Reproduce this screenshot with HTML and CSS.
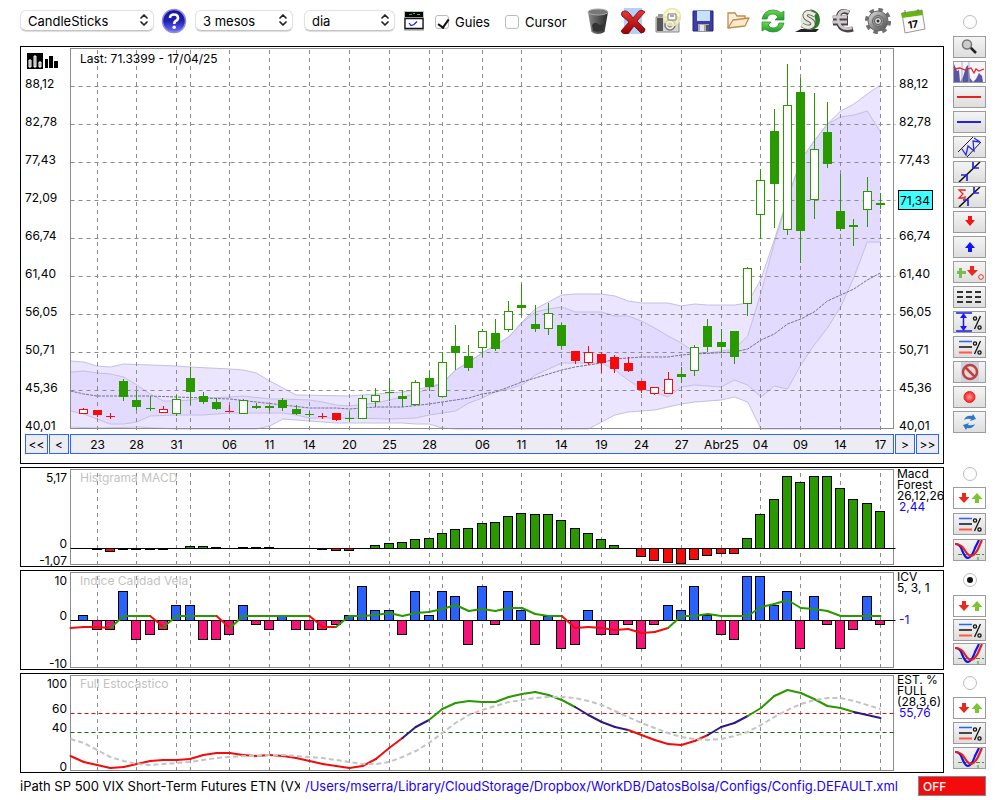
FILE: index.html
```html
<!DOCTYPE html>
<html lang="ca">
<head>
  <meta charset="UTF-8" />
  <meta name="viewport" content="width=device-width, initial-scale=1.0" />
  <title>iPath SP 500 VIX Short-Term Futures ETN</title>
  <link rel="stylesheet" href="styles.css">
</head>
<body>
  <!-- shared icons -->
  <svg class="defs" width="0" height="0" aria-hidden="true">
    <defs>
      <linearGradient id="gBall" x1="0" y1="0" x2="0" y2="1"><stop offset="0" stop-color="#15159a"/><stop offset=".5" stop-color="#2020b0"/><stop offset="1" stop-color="#7373ff"/></linearGradient>
      <linearGradient id="gMetal" x1="0" y1="0" x2="1" y2="1"><stop offset="0" stop-color="#e8e8e8"/><stop offset=".5" stop-color="#8e8e8e"/><stop offset="1" stop-color="#4a4a4a"/></linearGradient>
      <linearGradient id="gTrash" x1="0" x2="1" y1="0" y2="0"><stop offset="0" stop-color="#8a8a8a"/><stop offset=".5" stop-color="#555"/><stop offset="1" stop-color="#2b2b2b"/></linearGradient>
      <linearGradient id="gRed" x1="0" y1="0" x2="0" y2="1"><stop offset="0" stop-color="#e83a3a"/><stop offset="1" stop-color="#960000"/></linearGradient>
      <linearGradient id="gGreen" x1="0" y1="0" x2="0" y2="1"><stop offset="0" stop-color="#6fdc4a"/><stop offset="1" stop-color="#1f9a30"/></linearGradient>
      <radialGradient id="gDot"><stop offset="0" stop-color="#ff9a9a"/><stop offset="1" stop-color="#f02020"/></radialGradient>
      <symbol id="updown" viewBox="0 0 10 14"><path d="M2 5L5 2L8 5M2 9L5 12L8 9" fill="none" stroke="#222" stroke-width="1.7" stroke-linecap="round" stroke-linejoin="round"/></symbol>
      <symbol id="arrows" viewBox="0 0 31 20">
        <path d="M8 5h4v4h3.500L10 15L4.500 9H8z" fill="#e8291c"/>
        <path d="M21 15h4v-4h3.500L23 5L17.500 11H21z" fill="#7ac62f"/>
      </symbol>
      <symbol id="lines" viewBox="0 0 31 20">
        <path d="M5 4.500h13" stroke="#2a62ff" stroke-width="1.500"/><path d="M5 10h13" stroke="#111" stroke-width="1.500"/><path d="M5 15.500h13" stroke="#ff5a44" stroke-width="2"/>
        <g fill="none" stroke="#111" stroke-width="1.300"><path d="M26.500 4L20.500 17"/><circle cx="21" cy="6.500" r="1.600"/><circle cx="25.500" cy="15.500" r="1.600"/></g>
      </symbol>
      <symbol id="curves" viewBox="0 0 31 20">
        <path d="M4 14.500h26M24 17v3" stroke="#4a8a3a" stroke-dasharray="4 2"/>
        <path d="M1 4Q6 4 8 10Q11 18 14 18Q18 17 21 8L25 0" fill="none" stroke="#1414e6" stroke-width="2.200"/>
        <path d="M1 4Q7 4 10 9Q14 16 17 16Q21 15 24 9L28 0" fill="none" stroke="#e32020" stroke-width="2.200"/>
      </symbol>
    </defs>
  </svg>

  <main class="page">
    <header class="toolbar">
      <span class="select wide">
        <select id="chartType" aria-label="Tipus"><option>CandleSticks</option><option>Barres</option></select>
        <svg><use href="#updown"/></svg>
      </span>
      <button class="icon" title="Ajuda">
        <svg viewBox="0 0 26 26"><circle cx="13" cy="13" r="11.500" fill="url(#gBall)" stroke="#8d8dde" stroke-width="1.500"/><path d="M9 10Q9 6.500 13 6.500T17 10Q17 12 14.500 13.200Q13.200 14 13.200 16" fill="none" stroke="#fff" stroke-width="2.600"/><circle cx="13.200" cy="19.300" r="1.700" fill="#fff"/></svg>
      </button>
      <span class="select medium">
        <select id="range" aria-label="Rang"><option>3 mesos</option><option>6 mesos</option></select>
        <svg><use href="#updown"/></svg>
      </span>
      <span class="select small">
        <select id="period" aria-label="Període"><option>dia</option><option>setmana</option></select>
        <svg><use href="#updown"/></svg>
      </span>
      <button class="icon" title="Finestra">
        <svg viewBox="0 0 26 26"><path d="M3 3h20v20H3z" fill="#c4c4c4"/><path d="M4 4h18v5H4z"/><path d="M8 6.500h3m1-1h2m2 1h3" stroke="#27c427"/><path d="M4 10.500h18v10H4z" fill="#fff" stroke="#111" stroke-width="1.300"/><path d="M8 15l2 2.500l3-1l3-3" fill="none" stroke="#1b1be0" stroke-width="1.200"/></svg>
      </button>
      <label class="check"><input type="checkbox" checked> Guies</label>
      <label class="check"><input type="checkbox"> Cursor</label>

      <div class="actions">
        <button class="icon" title="Paperera">
          <svg viewBox="0 0 26 26"><path d="M3 4L6.500 24Q13 28 19.500 24L23 4z" fill="url(#gTrash)"/><ellipse cx="13" cy="4" rx="10" ry="3" fill="#777" stroke="#aaa"/><path d="M7 17q3-4 6-1t6-2l-1 8q-5 3-10 1z" fill="#333"/></svg>
        </button>
        <button class="icon" title="Esborrar">
          <svg viewBox="0 0 26 26"><path d="M4 0h18v26H4z" fill="#b4d0f8"/><path d="M2 4Q6 1 10 6L13 10L19 3Q22 1 25 4L17 13L25 21Q25 25 21 25L14 18L8 26Q3 27 1 23L9 14L2 8Q1 6 2 4z" fill="url(#gRed)" stroke="#7e0000" stroke-width=".8"/></svg>
        </button>
        <button class="icon" title="Captura">
          <svg viewBox="0 0 26 26"><path d="M1 9h23v15H1z" fill="#d5d5d5" stroke="#888"/><path d="M2 10h6v13H2z" fill="#555"/><path d="M3 6h5v3H3z" fill="#999"/><circle cx="15" cy="17" r="5" fill="#eee" stroke="#777" stroke-width="1.500"/><circle cx="15" cy="17" r="2.500" fill="#888"/><circle cx="17" cy="9" r="8.500" fill="#f8f6c8" fill-opacity=".7" stroke="#ebe6a8" stroke-width="1.500"/><path d="M13 6h8v6h-8z" fill="#fff" stroke="#777"/><path d="M15 8h4" stroke="#555"/></svg>
        </button>
        <button class="icon" title="Desar">
          <svg viewBox="0 0 26 26"><path d="M3 3h20v20H3z" fill="#3d3da8" stroke="#22227c"/><path d="M7 3h13v10H7z" fill="#c6e1fb"/><path d="M8 16h11v7H8z" fill="#aaa"/><path d="M10 17h4v6h-4z" fill="#e7e7e7"/><path d="M16 17h3v6h-3z" fill="#555"/></svg>
        </button>
        <button class="icon" title="Obrir">
          <svg viewBox="0 0 26 26"><path d="M3 20V5h7l2 3h8v4" fill="#fdf1de" stroke="#c38b4b" stroke-width="1.300"/><path d="M3 20L8 12L24 10L20 18z" fill="#fde9cb" stroke="#c38b4b" stroke-width="1.300" stroke-linejoin="round"/></svg>
        </button>
        <button class="icon" title="Refrescar">
          <svg viewBox="0 0 26 26"><g fill="url(#gGreen)" stroke="#1b8a2c" stroke-width=".7"><path d="M2 11Q4 2 13 2Q18 2 21 5L24 3V12H15L18 9Q16 6 13 6Q8 6 7 11z"/><path d="M24 15Q22 24 13 24Q8 24 5 21L2 23V14H11L8 17Q10 20 13 20Q18 20 19 15z"/></g></svg>
        </button>
        <button class="icon" title="Dòlar">
          <svg viewBox="0 0 26 26"><path d="M0 24h21l3-3H6z" fill="#222"/><circle cx="15" cy="12" r="9.500" fill="#dfe6d8"/><path d="M15 1Q25 3 25 12Q25 21 15 22Q22 17 20 10Q19 5 15 1z" fill="#2c7a2c"/><path d="M20 7Q12 2 10 7Q10 10 15 12Q20 15 17 18Q13 21 7 17" fill="none" stroke="#555" stroke-width="5"/><path d="M20 7Q12 2 10 7Q10 10 15 12Q20 15 17 18Q13 21 7 17" fill="none" stroke="#eceade" stroke-width="3.400"/></svg>
        </button>
        <button class="icon" title="Euro">
          <svg viewBox="0 0 26 26"><path d="M19 5Q9 0 8 11Q9 25 23 21M3 10l15 0M3 15h15" fill="none" stroke="#4b4347" stroke-width="5"/><path d="M19 4Q9 0 8 11Q9 23 22 20M2 9h15M2 14h15" fill="none" stroke="#cfc9cd" stroke-width="2.800"/></svg>
        </button>
        <button class="icon" title="Configuració">
          <svg viewBox="0 0 26 26"><circle cx="13" cy="13" r="11.400" fill="none" stroke="#707070" stroke-width="3.500" stroke-dasharray="4.500 4.454"/><circle cx="13" cy="13" r="10" fill="url(#gMetal)" stroke="#666"/><circle cx="13" cy="13" r="5.500" fill="#999" stroke="#666"/><circle cx="13" cy="13" r="3.500" fill="#ddd" stroke="#555"/><circle cx="13" cy="13" r="1.500" fill="#333"/></svg>
        </button>
        <button class="icon" title="Calendari">
          <svg viewBox="0 0 26 26"><path d="M2 5L22 2L25 21L5 25z" fill="#fafafa" stroke="#999"/><path d="M1 5L22 2L23 7L2 10z" fill="#67b512"/><path d="M5 2v4M18 1v4" stroke="#777"/><text x="8" y="20" class="cal" transform="rotate(-8 13 16)">17</text></svg>
        </button>
      </div>
    </header>

    <aside class="side side-tools">
      <input type="radio" name="panel" aria-label="Preu">
      <button title="Lupa"><svg viewBox="0 0 31 20"><path d="M16 10l6 6" stroke="#222" stroke-width="2.500"/><circle cx="13" cy="7.500" r="4.500" fill="#ccc" stroke="#777" stroke-width="1.500"/></svg></button>
      <button title="Volum"><svg viewBox="0 0 31 20"><path d="M0 0h31v20H0z" fill="#f4f4fa"/><path d="M0 20V2L3 9L5 8L6 20L9 15L12 5L14 3L16 16L19 20L22 17L25 11L28 14L29 20z" fill="#5757a6"/><path d="M8 0v20M15 0v20" stroke="#b0b0cc"/><path d="M0 7L6 6L11 8L17 6L20 11L22 7L25 9L30 7" fill="none" stroke="#e22" stroke-width="1.300"/></svg></button>
      <button title="Línia vermella"><svg viewBox="0 0 31 20"><path d="M3 10h24" stroke="#e52222" stroke-width="2"/></svg></button>
      <button title="Línia blava"><svg viewBox="0 0 31 20"><path d="M3 10h24" stroke="#2222f0" stroke-width="2"/></svg></button>
      <button title="Canal"><svg viewBox="0 0 31 20"><path d="M4 15L19 0M13 20L27 5" stroke="#222"/><path d="M8 12L12 18L14 9L20 14L19 4L26 5L20 1" fill="none" stroke="#2a2af0" stroke-width="1.300"/></svg></button>
      <button title="Tendència"><svg viewBox="0 0 31 20"><path d="M5 20L26 0" stroke="#111" stroke-width="1.500"/><path d="M7 13h6v6M19 0v6h6" fill="none" stroke="#2525d8" stroke-width="1.700"/></svg></button>
      <button title="Regressió"><svg viewBox="0 0 31 20"><path d="M5 20L26 0" stroke="#111" stroke-width="1.500"/><path d="M9 13h5v6M20 0v6h5" fill="none" stroke="#2525d8" stroke-width="1.700"/><path d="M11 4V3H5L9 7L5 11h6v-2" fill="none" stroke="#e22" stroke-width="1.300"/></svg></button>
      <button title="Venda"><svg viewBox="0 0 31 20"><path d="M14 4h4v4h3L16 14L11 8h3z" fill="#fa1212"/></svg></button>
      <button title="Compra"><svg viewBox="0 0 31 20"><path d="M14 15h4v-4h3L16 5L11 11h3z" fill="#1212fa"/></svg></button>
      <button title="Senyals"><svg viewBox="0 0 31 20"><path d="M5 6h3v3h4v3H8v4H5v-4H3V9h2z" fill="#79bd51"/><path d="M16 4h4v4h4L18 14L13 8h3z" fill="#e8291c"/><circle cx="27" cy="15" r="2.300" fill="#fff" stroke="#e22"/></svg></button>
      <button title="Nivells"><svg viewBox="0 0 31 20"><path d="M3 5h24M3 10h24M3 15h24" stroke="#333" stroke-width="2" stroke-dasharray="6 3"/></svg></button>
      <button title="Alçada"><svg viewBox="0 0 31 20"><path d="M2 1h16M2 19h16M9.500 3v14" stroke="#1919f0" stroke-width="1.500"/><path d="M9.500 1L13 6H6zM9.500 19L13 14H6z" fill="#1919f0"/><g fill="none" stroke="#111" stroke-width="1.300"><path d="M26.500 4L20.500 17"/><circle cx="21" cy="6.500" r="1.600"/><circle cx="25.500" cy="15.500" r="1.600"/></g></svg></button>
      <button title="Percentatges"><svg><use href="#lines"/></svg></button>
      <button title="Anul·lar"><svg viewBox="0 0 31 20"><path d="M7 0h18v20H7z" fill="#cfd0e0"/><circle cx="16" cy="10" r="7" fill="#ecd5d5" stroke="#b94444" stroke-width="2.500"/><path d="M11 5l10 10" stroke="#b94444" stroke-width="2.500"/></svg></button>
      <button title="Gravar"><svg viewBox="0 0 31 20"><circle cx="15.500" cy="10" r="5.500" fill="url(#gDot)" stroke="#e22"/></svg></button>
      <button title="Actualitzar"><svg viewBox="0 0 31 20"><g fill="#2a78c6"><path d="M10 8Q12 3 18 4L19 2L22 7L16 9L17 7Q13 6 10 8z"/><path d="M21 12Q19 17 13 16L12 18L9 13L15 11L14 13Q18 14 21 12z"/></g></svg></button>
    </aside>

    <section class="panel price">
      <svg class="chart" id="price"></svg>
      <nav class="dates">
        <button>&lt;&lt;</button>
        <button class="one">&lt;</button>
        <svg class="dateBar" id="dates"></svg>
        <button class="one">&gt;</button>
        <button>&gt;&gt;</button>
      </nav>
    </section>

    <section class="panel"><svg class="chart" id="macd"></svg></section>
    <aside class="side side-macd">
      <input type="radio" name="panel" aria-label="Macd">
      <button class="plain" title="Senyals"><svg><use href="#arrows"/></svg></button>
      <button title="Percentatges"><svg><use href="#lines"/></svg></button>
      <button title="Corbes"><svg><use href="#curves"/></svg></button>
    </aside>

    <section class="panel"><svg class="chart" id="icv"></svg></section>
    <aside class="side side-icv">
      <input type="radio" name="panel" aria-label="ICV" checked>
      <button class="plain" title="Senyals"><svg><use href="#arrows"/></svg></button>
      <button title="Percentatges"><svg><use href="#lines"/></svg></button>
      <button title="Corbes"><svg><use href="#curves"/></svg></button>
    </aside>

    <section class="panel"><svg class="chart" id="sto"></svg></section>
    <aside class="side side-sto">
      <input type="radio" name="panel" aria-label="Estocastico">
      <button class="plain" title="Senyals"><svg><use href="#arrows"/></svg></button>
      <button title="Percentatges"><svg><use href="#lines"/></svg></button>
      <button title="Corbes"><svg><use href="#curves"/></svg></button>
    </aside>

    <footer class="status">
      <span class="name">iPath SP 500 VIX Short-Term Futures ETN (VXX)</span>
      <a href="#">/Users/mserra/Library/CloudStorage/Dropbox/WorkDB/DatosBolsa/Configs/Config.DEFAULT.xml</a>
      <button class="off">OFF</button>
    </footer>
  </main>

  <script src="chart.js"></script>
</body>
</html>
```
FILE: styles.css
```css
* {
  box-sizing: border-box;
}
body {
  margin: 0;
  background: #fff;
  color: #000;
  font-family: Inter, Roboto, sans-serif;
  font-size: 12px;
}
button, select, input {
  font: inherit;
  color: inherit;
  margin: 0;
  padding: 0;
}
.defs {
  position: absolute;
}
.page {
  display: grid;
  grid-template-columns: 1fr 33px;
  grid-template-rows: 43px auto auto auto auto 20px;
  gap: 3px 9px;
  padding: 0 14px 0 20px;
}

/* toolbar */
.toolbar {
  grid-area: 1 / 1;
  display: flex;
  align-items: center;
  padding-bottom: 2px;
}
.select {
  position: relative;
  height: 21px;
  margin-right: 7px;
}
.select.wide {
  width: 134px;
}
.select.medium {
  width: 98px;
  margin-left: 8px;
  margin-right: 11px;
}
.select.small {
  width: 91px;
  margin-right: 6px;
}
.select select {
  appearance: none;
  width: 100%;
  height: 100%;
  padding-left: 7px;
  font-size: 13px;
  background: #fff;
  border: 1px solid #e2e2e2;
  border-bottom-color: #c4c4c4;
  border-radius: 6px;
  box-shadow: 0 1px 1px #ddd;
}
.select svg {
  position: absolute;
  top: 3px;
  right: 5px;
  width: 10px;
  height: 14px;
  pointer-events: none;
}
.icon {
  width: 26px;
  height: 26px;
  border: 0;
  background: none;
}
.icon svg {
  display: block;
  width: 26px;
  height: 26px;
}
.check {
  display: flex;
  align-items: center;
  gap: 6px;
  margin-left: 8px;
  padding-top: 3px;
  font-size: 13px;
}
.check + .check {
  margin-left: 15px;
}
input[type="checkbox"], input[type="radio"] {
  appearance: none;
  position: relative;
  width: 14px;
  height: 14px;
  background: #fff;
  border: 1px solid #bbb;
  border-radius: 3px;
}
input[type="radio"] {
  border-radius: 50%;
}
input[type="checkbox"]:checked::after {
  content: "";
  position: absolute;
  left: 4px;
  top: 1px;
  width: 5px;
  height: 9px;
  border: solid #111;
  border-width: 0 2px 2px 0;
  transform: rotate(35deg);
}
input[type="radio"]:checked::after {
  content: "";
  position: absolute;
  inset: 3px;
  border-radius: 50%;
  background: #111;
}
.actions {
  display: flex;
  gap: 9px;
  margin-left: auto;
  margin-right: 18px;
}
.cal {
  font-size: 10px;
  font-weight: bold;
}

/* tool columns */
.side {
  grid-column: 2;
  display: flex;
  flex-direction: column;
  align-items: center;
  gap: 3px;
}
.side button {
  width: 33px;
  height: 22px;
  border: 1px solid #9c9c9c;
  background: linear-gradient(#f4f4f4, #dedede);
}
.side .plain {
  background: #fff;
}
.side button svg {
  display: block;
  width: 31px;
  height: 20px;
}
.side-tools {
  grid-row: 1 / 3;
  padding-top: 15px;
}
.side-tools input {
  margin-bottom: 4px;
}
.side-macd {
  gap: 4px;
}
.side-macd input {
  margin-bottom: 2px;
}
.side-icv {
  gap: 2px;
  padding-top: 3px;
}
.side-icv input {
  margin-bottom: 6px;
}
.side-sto {
  padding-top: 3px;
}
.side-sto input {
  margin-bottom: 4px;
}

/* chart panels */
.panel {
  grid-column: 1;
  min-width: 0;
  border: 1px solid #000;
}
.chart {
  display: block;
  width: 100%;
  height: 98px;
}
.price .chart {
  height: 387px;
}
.dates {
  display: flex;
  gap: 1px;
  padding: 0 4px 9px;
}
.dates button, .dateBar {
  height: 20px;
  background: #ececf2;
  border: 1px solid #2962ff;
}
.dates button {
  width: 23px;
}
.dates .one {
  width: 20px;
}
.dateBar {
  flex: 1;
  min-width: 0;
}
text {
  font-size: 12px;
}
.title {
  fill: #c2c2c2;
}
.value {
  fill: #1a00ff;
}

/* drawing */
.frame, .grid {
  fill: none;
  stroke: #8c8c8c;
}
.grid {
  stroke-dasharray: 4 4;
}
.outer {
  fill: #ebe5ff;
}
.inner {
  fill: #e3daff;
}
.edge {
  fill: none;
  stroke: #c5bfe2;
}
.mid {
  fill: none;
  stroke: #77738c;
  stroke-dasharray: 3 1;
}
.line {
  fill: none;
  stroke-width: 2;
  stroke-linecap: round;
}
.slow {
  stroke: #c4c4c4;
  stroke-linecap: butt;
  stroke-dasharray: 5 3;
}
.zero {
  stroke: #000;
}

/* status bar */
.status {
  grid-column: 1 / 3;
  display: flex;
  align-items: center;
  font-size: 13px;
  white-space: nowrap;
}
.status .name {
  width: 280px;
  margin-right: 5px;
  overflow: hidden;
}
.status a {
  color: #1a00ff;
  text-decoration: none;
}
.off {
  width: 68px;
  height: 20px;
  margin-left: auto;
  padding-left: 4px;
  text-align: left;
  font-size: 12px;
  font-weight: 500;
  color: #fff;
  background: #f40b0b;
  border: 1px solid #888;
}
```
FILE: chart.js
```js
const NS = 'http://www.w3.org/2000/svg';
const GREEN = '#2a9900';
const RED = '#f40b0b';
const PURPLE = '#2d1a80';
const LEFT = 70.5;
const STEPS = 61;
let right, step;

const grid = [2, 5, 8, 9, 12, 15, 18, 21, 24, 27, 28, 31, 34, 37, 40, 43, 46, 49, 52, 55, 58, 61];
const labels = { 2: '23', 5: '28', 8: '31', 12: '06', 15: '11', 18: '14', 21: '20', 24: '25', 27: '28', 31: '06',
  34: '11', 37: '14', 40: '19', 43: '24', 46: '27', 49: 'Abr25', 52: '04', 55: '09', 58: '14', 61: '17' };
const prices = ['88,12', '82,78', '77,43', '72,09', '66,74', '61,40', '56,05', '50,71', '45,36', '40,01'];

// colour (upper case = hollow), high, body top, body bottom, low
const candles = [
  ['R', 408, 409, 413, 414], ['r', 410, 410, 415, 417], ['r', 413, 416, 417, 419], ['g', 379, 381, 397, 401],
  ['g', 391, 400, 407, 410], ['g', 396, 408, 409, 411], ['R', 406, 409, 412, 413], ['G', 395, 399, 413, 416],
  ['g', 367, 378, 392, 405], ['g', 392, 396, 402, 404], ['g', 398, 402, 409, 410], ['r', 405, 411, 412, 412],
  ['G', 399, 400, 413, 414], ['g', 403, 406, 408, 409], ['g', 405, 406, 408, 411], ['g', 398, 400, 408, 411],
  ['g', 405, 409, 414, 415], ['g', 411, 414, 415, 417], ['r', 413, 416, 417, 419], ['r', 413, 413, 420, 421],
  ['g', 412, 418, 419, 422], ['G', 395, 398, 418, 419], ['G', 388, 395, 401, 407], ['g', 378, 392, 393, 401],
  ['g', 390, 396, 399, 407], ['G', 380, 382, 404, 405], ['g', 371, 378, 387, 391], ['G', 352, 362, 396, 397],
  ['g', 325, 346, 353, 370], ['g', 345, 356, 368, 371], ['G', 329, 331, 347, 357], ['g', 319, 333, 349, 351],
  ['G', 301, 311, 329, 332], ['g', 284, 305, 308, 316], ['g', 305, 324, 329, 332], ['G', 303, 313, 328, 335],
  ['g', 323, 325, 346, 349], ['r', 351, 351, 361, 364], ['R', 346, 352, 362, 365], ['r', 352, 354, 363, 373],
  ['r', 355, 357, 369, 373], ['r', 357, 363, 371, 372], ['r', 381, 381, 390, 393], ['R', 387, 387, 393, 395],
  ['R', 372, 379, 393, 394], ['g', 367, 374, 377, 383], ['G', 345, 347, 370, 376], ['g', 319, 326, 347, 352],
  ['g', 329, 342, 347, 353], ['g', 331, 331, 357, 364], ['G', 267, 268, 303, 316], ['G', 169, 180, 214, 239],
  ['g', 109, 131, 184, 228], ['G', 64, 105, 229, 235], ['g', 78, 92, 231, 263], ['G', 93, 149, 199, 219],
  ['g', 102, 132, 164, 168], ['g', 174, 211, 229, 231], ['g', 219, 225, 227, 246], ['G', 177, 191, 209, 227],
  ['g', 193, 203, 205, 209]
];

// band edges as [session, y]
const outerTop = [[0, 361], [1, 362], [2, 366], [3, 367], [4, 364], [8, 366], [9, 367], [12, 369], [13, 370], [14, 373],
  [15, 381], [16, 388], [17, 395], [21, 396], [24, 393], [25, 392], [27, 387], [28, 383], [29, 370], [30, 362],
  [31, 353], [32, 345], [33, 337], [34, 322], [35, 309], [36, 302], [37, 295], [38, 294], [40, 294], [41, 296],
  [42, 301], [43, 303], [45, 303], [46, 306], [47, 304], [48, 305], [50, 305], [51, 303], [52, 279], [53, 240],
  [54, 198], [55, 160], [56, 141], [57, 124], [58, 111], [59, 104], [60, 94], [61, 85]];
const innerTop = [[0, 372], [1, 371], [2, 373], [3, 374], [4, 377], [5, 385], [6, 394], [7, 401], [8, 401], [9, 400],
  [10, 398], [12, 397], [13, 396], [15, 399], [16, 399], [18, 400], [19, 402], [20, 405], [21, 406], [23, 403],
  [24, 400], [25, 397], [26, 394], [27, 388], [28, 384], [29, 370], [30, 362], [31, 353], [32, 345], [33, 337],
  [34, 323], [35, 312], [36, 309], [37, 307], [38, 312], [40, 312], [41, 316], [42, 316], [43, 321], [44, 328],
  [45, 336], [46, 343], [47, 352], [48, 353], [49, 351], [50, 349], [51, 336], [52, 293], [53, 243], [54, 200],
  [55, 160], [56, 141], [57, 124], [58, 117], [59, 115], [60, 111], [61, 132]];
const innerLow = [[0, 411], [1, 414], [2, 419], [3, 424], [4, 424], [5, 422], [6, 416], [8, 415], [10, 415], [12, 413],
  [16, 413], [17, 415], [18, 418], [21, 418], [24, 419], [26, 418], [27, 415], [29, 411], [30, 403], [31, 398],
  [32, 392], [33, 389], [34, 385], [35, 375], [36, 369], [37, 363], [40, 363], [41, 370], [42, 380], [43, 389],
  [44, 392], [45, 397], [46, 387], [47, 385], [49, 387], [50, 380], [51, 385], [52, 397], [53, 386], [54, 389],
  [55, 365], [56, 345], [57, 328], [58, 307], [59, 277], [60, 242], [61, 242]];
const outerLow = [[0, 427], [2, 428], [5, 427], [8, 429], [14, 429], [15, 426], [16, 419], [18, 421], [20, 423],
  [25, 423], [26, 424], [27, 424], [28, 428], [29, 429], [39, 429], [40, 422], [41, 415], [42, 412], [43, 411],
  [44, 410], [45, 407], [46, 404], [47, 402], [49, 400], [50, 397], [51, 402], [52, 429], [61, 429]];
const average = [[0, 391], [1, 394], [2, 396], [6, 396], [8, 397], [10, 398], [12, 399], [14, 402], [16, 405],
  [18, 408], [20, 408], [21, 409], [23, 407], [25, 407], [27, 404], [28, 402], [30, 398], [31, 394], [32, 392],
  [33, 387], [34, 382], [35, 378], [36, 374], [37, 370], [38, 367], [40, 363], [41, 359], [43, 357], [45, 357],
  [46, 355], [47, 354], [50, 352], [51, 349], [52, 340], [53, 334], [54, 324], [55, 319], [56, 312], [57, 301],
  [58, 295], [59, 289], [60, 280], [61, 273]];

// bar heights, sessions 1 to 61
const macd = [0, -1, -3, -1, -1, -1, -1, 0, 2, 2, 1, 0, 1, 1, 1, 0, 0, 0, -1, -2, -2, 0, 3, 5, 6, 9, 10, 15, 19, 20,
  25, 26, 32, 35, 34, 34, 28, 20, 15, 9, 3, 0, -8, -12, -14, -15, -11, -7, -5, -5, 10, 34, 49, 72, 66, 72, 72, 60,
  49, 45, 37];
const icv = [5, -9, -9, 29, -19, -14, -9, 15, 15, -19, -19, -14, 15, -4, -9, 4, -9, -9, -9, -4, 5, 34, 10, 10, -14,
  29, 5, 29, 24, -24, 34, -4, 29, 10, -24, 4, -28, -24, 10, -14, -14, -4, -28, -4, 15, 10, 34, 5, -14, -19, 44, 44,
  15, 29, -28, 24, -4, -28, -9, 24, -4];

const icvLine = [628, 627, 627, 628, 616, 616, 616, 627, 616, 616, 616, 616, 628, 616, 616, 616, 616, 616, 616, 627,
  627, 616, 616, 615, 613, 616, 613, 612, 609, 605, 611, 609, 611, 608, 608, 614, 616, 616, 628, 627, 628, 630, 629,
  633, 632, 628, 616, 616, 614, 616, 616, 616, 607, 604, 600, 608, 609, 611, 616, 616, 616, 616];
const stoFast = [756, 762, 765, 768, 767, 764, 761, 760, 760, 759, 755, 753, 753, 755, 756, 755, 756, 758, 761, 764,
  766, 768, 766, 759, 748, 738, 727, 720, 709, 703, 701, 702, 702, 697, 694, 692, 695, 700, 707, 715, 722, 727, 730,
  735, 740, 744, 745, 741, 735, 727, 723, 716, 708, 696, 690, 693, 699, 706, 708, 712, 715, 718];
const stoSlow = [739, 743, 750, 757, 761, 764, 765, 764, 763, 762, 760, 758, 757, 756, 756, 755, 755, 756, 757, 758,
  760, 762, 764, 764, 762, 757, 751, 743, 733, 723, 715, 710, 706, 702, 700, 698, 697, 697, 698, 701, 705, 711, 717,
  723, 728, 733, 737, 739, 740, 739, 736, 732, 725, 717, 710, 704, 700, 698, 698, 701, 705, 709];

const x = i => LEFT + i * step;
const px = i => Math.round(x(i) - 0.5) + 0.5;

function add(svg, tag, attrs, text) {
  const el = document.createElementNS(NS, tag);
  for (const key in attrs) el.setAttribute(key, attrs[key]);
  if (text) el.textContent = text;
  svg.appendChild(el);
}

function label(svg, text, lx, ly, anchor = 'start', cls = '') {
  add(svg, 'text', { x: lx, y: ly, 'text-anchor': anchor, class: cls }, text);
}

function line(svg, x1, y1, x2, y2, attrs) {
  add(svg, 'line', { x1, y1, x2, y2, ...attrs });
}

// all panels share the same x axis; the view starts inside the panel border
function prepare(id, top) {
  const svg = document.getElementById(id);
  const box = svg.getBoundingClientRect();
  svg.innerHTML = '';
  svg.setAttribute('viewBox', `21 ${top} ${box.width} ${box.height}`);
  right = 21 + box.width - 49.5;
  step = (right - 13 - LEFT) / STEPS;
  return svg;
}

function frame(svg, top, bottom) {
  add(svg, 'rect', { x: LEFT, y: top, width: right - LEFT, height: bottom - top, class: 'frame' });
}

function verticals(svg, top, bottom) {
  grid.forEach(i => line(svg, px(i), top, px(i), bottom, { class: 'grid' }));
}

const points = list => list.map(([i, y]) => `${x(i)},${y}`).join(' ');

function drawPrice() {
  const svg = prepare('price', 47);
  add(svg, 'polygon', { points: points(outerTop) + ' ' + points([...outerLow].reverse()), class: 'outer' });
  add(svg, 'polygon', { points: points(innerTop) + ' ' + points([...innerLow].reverse()), class: 'inner' });
  [outerTop, innerTop, innerLow, outerLow].forEach(e => add(svg, 'polyline', { points: points(e), class: 'edge' }));
  add(svg, 'polyline', { points: points(average), class: 'mid' });
  frame(svg, 48.5, 428.5);
  verticals(svg, 50, 430);
  prices.forEach((p, n) => {
    const y = 86.5 + n * 38;
    if (n < 9) line(svg, LEFT, y, right + 2, y, { class: 'grid' });
    label(svg, p, 25, y + 1.5);
    // the last price tag covers this one
    if (n !== 3) label(svg, p, right + 5.5, y + 1.5);
  });
  candles.forEach(([type, high, top, bottom, low], n) => {
    const cx = px(n + 1);
    const hollow = type === type.toUpperCase();
    const color = type.toLowerCase() === 'g' ? GREEN : RED;
    line(svg, cx, high, cx, low, { stroke: color });
    if (hollow) add(svg, 'rect', { x: cx - 4, y: top + 0.5, width: 8, height: bottom - top, fill: '#fff', stroke: color });
    else add(svg, 'rect', { x: cx - 4.5, y: top, width: 9, height: bottom - top, fill: color });
  });
  label(svg, 'Last: 71.3399 - 17/04/25', 80, 63);
  add(svg, 'rect', { x: right + 5, y: 190.5, width: 34, height: 19, fill: '#40ffff', stroke: '#000' });
  label(svg, '71,34', right + 6.5, 205);
  // bars logo
  add(svg, 'path', { d: 'M27 53h16v16h-16zM45 59h3v9h-3zM49 56h4v12h-4zM54 61h4v7h-4z' });
  add(svg, 'path', { d: 'M29 60h2v7h-2zM34 56h2v11h-2zM39 62h2v5h-2z', fill: '#999', stroke: '#fff' });
}

function drawDates() {
  const svg = document.getElementById('dates');
  svg.setAttribute('viewBox', `71 434 ${right - LEFT - 1} 18`);
  svg.innerHTML = '';
  for (const i in labels) label(svg, labels[i], px(+i), 448, 'middle');
}

function bars(svg, data, zero, up, down) {
  data.forEach((h, n) => {
    if (!h) return;
    const bx = px(n + 1) - 5;
    const y = h > 0 ? zero - h : zero;
    add(svg, 'rect', { x: bx, y, width: 9, height: Math.abs(h), fill: h > 0 ? up : down, stroke: '#000' });
  });
}

function segments(svg, data, color) {
  for (let i = 1; i < data.length; i++) {
    line(svg, x(i - 1), data[i - 1], x(i), data[i], { class: 'line', stroke: color(data[i]) });
  }
}

function drawMacd() {
  const svg = prepare('macd', 468);
  frame(svg, 469.5, 564.5);
  verticals(svg, 473, 566);
  bars(svg, macd, 548.5, GREEN, RED);
  line(svg, LEFT, 548.5, right + 2, 548.5, { class: 'zero' });
  label(svg, 'Histgrama MACD', 80, 482, 'start', 'title');
  label(svg, '5,17', 67, 482, 'end');
  label(svg, '0', 67, 548, 'end');
  label(svg, '-1,07', 67, 565, 'end');
  ['Macd', 'Forest', '26,12,26'].forEach((t, n) => label(svg, t, right + 3.5, 478 + n * 11));
  label(svg, '2,44', right + 5.5, 511, 'start', 'value');
}

function drawIcv() {
  const svg = prepare('icv', 571);
  frame(svg, 572.5, 667.5);
  verticals(svg, 576, 669);
  bars(svg, icv, 620.5, '#2962ff', '#f5127b');
  line(svg, LEFT, 620.5, right + 2, 620.5, { class: 'zero' });
  segments(svg, icvLine, y => y > 620 ? RED : GREEN);
  label(svg, 'Indice Calidad Vela', 80, 585, 'start', 'title');
  label(svg, '10', 67, 585, 'end');
  label(svg, '0', 67, 620, 'end');
  label(svg, '-10', 67, 668, 'end');
  label(svg, 'ICV', right + 3.5, 581);
  label(svg, '5, 3, 1', right + 3.5, 592);
  label(svg, '-1', right + 5.5, 624, 'start', 'value');
}

function drawSto() {
  const svg = prepare('sto', 674);
  frame(svg, 675.5, 770.5);
  verticals(svg, 679, 772);
  line(svg, LEFT, 713.5, right + 2, 713.5, { stroke: '#d41010', 'stroke-dasharray': '4 3' });
  line(svg, LEFT, 732.5, right + 2, 732.5, { stroke: '#0b6e0b', 'stroke-dasharray': '4 3' });
  segments(svg, stoFast, y => y < 713 ? GREEN : y > 732 ? RED : PURPLE);
  add(svg, 'polyline', { points: points(stoSlow.map((y, i) => [i, y])), class: 'line slow' });
  label(svg, 'Full Estocastico', 80, 688, 'start', 'title');
  label(svg, '100', 67, 688, 'end');
  label(svg, '60', 67, 713, 'end');
  label(svg, '40', 67, 732, 'end');
  label(svg, '0', 67, 771, 'end');
  ['EST. %', 'FULL', '(28,3,6)'].forEach((t, n) => label(svg, t, right + 3.5, 684 + n * 11));
  label(svg, '55,76', right + 5.5, 717, 'start', 'value');
}

function draw() {
  drawPrice();
  drawDates();
  drawMacd();
  drawIcv();
  drawSto();
}

window.addEventListener('resize', draw);
draw();
```
